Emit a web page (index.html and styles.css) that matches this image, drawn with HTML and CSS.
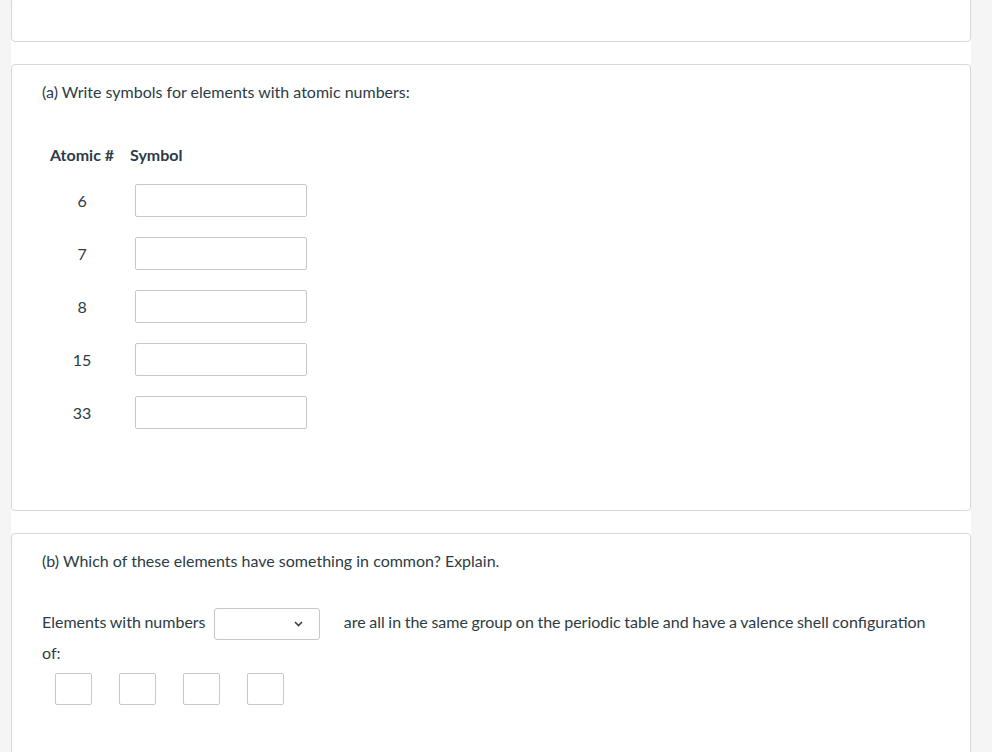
FILE: index.html
```html
<!DOCTYPE html>
<html lang="en">
<head>
<meta charset="utf-8">
<title>Quiz question</title>
<link rel="stylesheet" href="styles.css">
</head>
<body>
<div class="column">
  <div class="card card-top"></div>

  <div class="card card-a">
    <p class="prompt">(a) Write symbols for elements with atomic numbers:</p>
    <table class="elements">
      <thead>
        <tr><th class="col-num">Atomic #</th><th class="col-sym">Symbol</th></tr>
      </thead>
      <tbody>
        <tr><td class="num">6</td><td class="sym"><input type="text" class="field"></td></tr>
        <tr><td class="num">7</td><td class="sym"><input type="text" class="field"></td></tr>
        <tr><td class="num">8</td><td class="sym"><input type="text" class="field"></td></tr>
        <tr><td class="num">15</td><td class="sym"><input type="text" class="field"></td></tr>
        <tr><td class="num">33</td><td class="sym"><input type="text" class="field"></td></tr>
      </tbody>
    </table>
  </div>

  <div class="card card-b">
    <p class="prompt">(b) Which of these elements have something in common? Explain.</p>
    <p class="sentence">Elements with numbers <span class="select"><svg class="chev" width="9" height="6" viewBox="0 0 9 6"><path d="M1 1 L4.5 4.5 L8 1" fill="none" stroke="#444" stroke-width="1.7"/></svg></span> are all in the same group on the periodic table and have a valence shell configuration of:</p>
    <div class="boxes">
      <input type="text" class="box">
      <input type="text" class="box">
      <input type="text" class="box">
      <input type="text" class="box">
    </div>
  </div>
</div>
</body>
</html>
```
FILE: styles.css
```css
html, body {
  margin: 0;
  padding: 0;
}
body {
  background: #f5f5f5;
  font-family: Lato, "Noto Sans", sans-serif;
  font-size: 16px;
  color: #2d3b45;
  height: 752px;
  overflow: hidden;
}
.column {
  width: 960px;
  margin-left: 11px;
  background: #ffffff;
  min-height: 760px;
  padding-top: 1px;
  margin-top: -4px;
}
.card {
  border: 1px solid #d8d8d8;
  border-radius: 4px;
  background: #fff;
  margin-bottom: 22px;
  box-sizing: border-box;
}
.card-top {
  height: 45px;
}
.card-a {
  height: 447px;
  padding: 15px 30px 0;
}
.card-b {
  height: 260px;
  padding: 15px 30px 0;
}
.prompt {
  margin: 0;
  line-height: 24px;
}
.elements {
  border-collapse: collapse;
  margin-top: 32px;
}
.elements th {
  font-weight: bold;
  text-align: left;
  height: 36px;
  padding: 0 8px 2px;
}
.elements td {
  height: 33px;
  padding: 10px 0;
}
.elements td.num {
  text-align: center;
  padding: 10px 8px;
}
.elements td.sym {
  padding-left: 13px;
}
.field {
  display: block;
  width: 172px;
  height: 33px;
  box-sizing: border-box;
  border: 1px solid #c8c8c8;
  border-radius: 2px;
  margin: 0;
  padding: 0;
  background: #fff;
}
.sentence {
  margin: 33px 0 0;
  line-height: 31px;
  word-spacing: -0.5px;
}
.select {
  display: inline-flex;
  align-items: center;
  justify-content: flex-end;
  vertical-align: middle;
  width: 106px;
  height: 32px;
  box-sizing: border-box;
  border: 1px solid #c8c8c8;
  border-radius: 3px;
  padding-right: 16px;
  margin: -5px 20px -5px 5px;
  word-spacing: 0;
}
.chev {
  display: block;
}
.boxes {
  display: flex;
  gap: 27px;
  padding-left: 13px;
  margin-top: 5px;
}
.box {
  width: 37px;
  height: 32px;
  box-sizing: border-box;
  border: 1px solid #c8c8c8;
  border-radius: 2px;
  margin: 0;
  padding: 0;
  background: #fff;
}
```
